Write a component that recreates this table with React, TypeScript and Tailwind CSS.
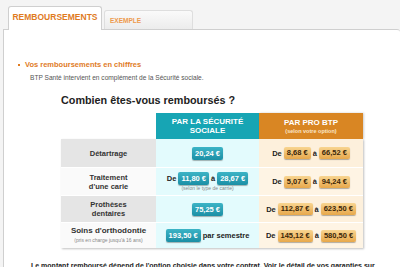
import React from 'react';

const font = { fontFamily: '"Liberation Sans", Arial, sans-serif' };

function Teal({ children }: { children: React.ReactNode }) {
  return (
    <span className="inline-block rounded-[2px] bg-gradient-to-b from-[#3cb4c6] to-[#1a8fa5] px-[3px] text-[7.5px] leading-[13px] font-bold text-white shadow-[0_1px_1px_rgba(0,0,0,0.3)]">
      {children}
    </span>
  );
}

function Gold({ children }: { children: React.ReactNode }) {
  return (
    <span className="inline-block rounded-[2px] bg-gradient-to-b from-[#f8d590] to-[#e7a84a] px-[3px] text-[7.5px] leading-[12px] font-bold text-[#3b2608] shadow-[0_1px_1px_rgba(0,0,0,0.3)]">
      {children}
    </span>
  );
}

const rows = [
  {
    label: <>Détartrage</>,
    grey: true,
    h: 'h-[28px]',
    secu: <Teal>20,24 €</Teal>,
    pro: ['8,68 €', '66,52 €'],
  },
  {
    label: (
      <>
        Traitement
        <br />
        d'une carie
      </>
    ),
    grey: false,
    h: 'h-[28px]',
    secu: (
      <div className="flex flex-col items-center">
        <div className="flex items-center gap-[2px] text-[7.5px] font-bold text-[#222]">
          De <Teal>11,80 €</Teal> à <Teal>28,67 €</Teal>
        </div>
        <div className="text-[5px] leading-[7px] text-[#888]">(selon le type de carrie)</div>
      </div>
    ),
    pro: ['5,07 €', '94,24 €'],
  },
  {
    label: (
      <>
        Prothèses
        <br />
        dentaires
      </>
    ),
    grey: true,
    h: 'h-[27px]',
    secu: <Teal>75,25 €</Teal>,
    pro: ['112,87 €', '623,50 €'],
  },
  {
    label: (
      <>
        <span className="text-[8px]">Soins d'orthodontie</span>
        <br />
        <span className="text-[5px] font-normal text-[#888]">(pris en charge jusqu'à 16 ans)</span>
      </>
    ),
    grey: false,
    h: 'h-[26px]',
    secu: (
      <div className="flex items-center gap-[2px] text-[7.5px] font-bold text-[#222]">
        <Teal>193,50 €</Teal> par semestre
      </div>
    ),
    pro: ['145,12 €', '580,50 €'],
  },
];

export default function App() {
  return (
    <div className="h-[267px] w-[400px] overflow-hidden bg-[#f4f4f4]" style={font}>
      <div className="flex items-end gap-[2px] pl-[8px] pt-[6px]">
        <div className="relative z-10 -mb-px flex h-[24px] w-[94px] items-start justify-center rounded-t-[3px] border border-b-0 border-[#cfcfcf] bg-white pt-[4px] text-[8.5px] font-bold text-[#e07b1f]">
          REMBOURSEMENTS
        </div>
        <div className="flex h-[19px] w-[89px] items-start rounded-t-[3px] border border-b-0 border-[#dedede] bg-gradient-to-b from-[#fafafa] to-[#ececec] pl-[5px] pt-[5px] text-[6.5px] font-bold text-[#ee9a4d]">
          EXEMPLE
        </div>
      </div>
      <div className="ml-[3px] h-[300px] rounded-tr-[3px] border-l border-t border-[#cfcfcf] bg-white pt-[29px]">
        <div className="flex items-center gap-[5px] pl-[14px] text-[7.5px] font-bold text-[#e07b1f]">
          <span className="h-[2px] w-[2px] bg-[#e07b1f]" />
          Vos remboursements en chiffres
        </div>
        <div className="mt-[3px] pl-[26px] text-[6.6px] text-[#555]">
          BTP Santé intervient en complément de la Sécurité sociale.
        </div>
        <div className="mt-[9px] pl-[57px] text-[10.8px] font-bold text-[#222]">Combien êtes-vous remboursés ?</div>

        <div className="mt-[5px] ml-[57px] w-[302px]">
          <div className="grid grid-cols-[95px_103px_104px]">
            <div />
            <div className="flex h-[26px] flex-col items-center justify-center bg-[#17a5b4] text-center text-[8px] leading-[9px] font-bold text-white">
              <span>PAR LA SÉCURITÉ</span>
              <span>SOCIALE</span>
            </div>
            <div className="flex h-[26px] flex-col items-center justify-center bg-[#d98623] text-center text-white shadow-[1px_0_2px_rgba(0,0,0,0.2)]">
              <span className="text-[8px] leading-[9px] font-bold">PAR PRO BTP</span>
              <span className="text-[5.5px] leading-[8px] font-bold text-[#fbe6c8]">(selon votre option)</span>
            </div>
          </div>
          <div className="shadow-[1px_1px_2px_rgba(0,0,0,0.25)]">
            {rows.map((r, i) => (
              <div key={i} className={`grid grid-cols-[95px_103px_104px] ${r.h} border-t border-white first:border-t-0`}>
                <div
                  className={`flex flex-col items-center justify-center text-center text-[7.5px] leading-[9px] font-bold text-[#333] ${
                    r.grey ? 'bg-[#e5e5e5]' : 'bg-[#fafafa]'
                  }`}
                >
                  <div>{r.label}</div>
                </div>
                <div className="flex items-center justify-center bg-[#e3fbfd]">{r.secu}</div>
                <div
                  className={`flex items-center justify-center gap-[2px] text-[7.5px] font-bold text-[#222] ${
                    r.grey ? 'bg-[#fdf0dc]' : 'bg-[#fef4e4]'
                  }`}
                >
                  De <Gold>{r.pro[0]}</Gold> à <Gold>{r.pro[1]}</Gold>
                </div>
              </div>
            ))}
          </div>
        </div>

        <div className="mt-[13px] pl-[27px] text-[7px] font-bold whitespace-nowrap text-[#222]">
          Le montant remboursé dépend de l'option choisie dans votre contrat. Voir le détail de vos garanties sur
        </div>
      </div>
    </div>
  );
}
